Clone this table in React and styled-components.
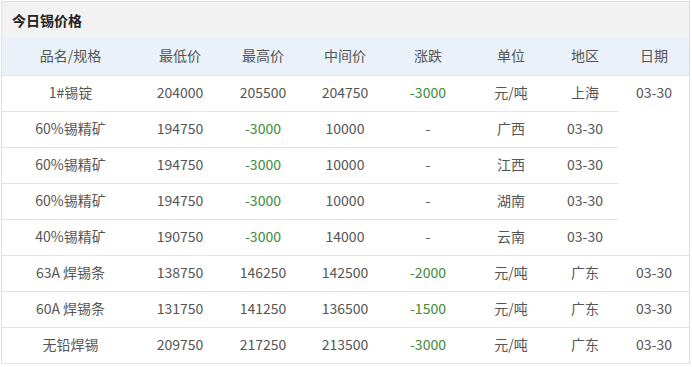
import React from 'react';
import styled, { createGlobalStyle } from 'styled-components';

const GlobalStyle = createGlobalStyle`
    body {
        margin: 0;
        background: #fff;
        font-family: "Noto Sans CJK SC", "Liberation Sans", sans-serif;
    }
`

const Panel = styled.div`
    width: 689px;
    margin: 1px 0 0 1px;
    box-sizing: border-box;
    border: 1px solid #dedede;
    border-bottom: none;
    background: #fff;
`

const Titulo = styled.div`
    height: 36px;
    line-height: 36px;
    padding-left: 10px;
    background: #f2f2f2;
    color: #222;
    font-size: 14px;
    font-weight: bold;
`

const Tabela = styled.table`
    width: 100%;
    table-layout: fixed;
    border-collapse: separate;
    border-spacing: 0;
    font-size: 14px;
    color: #555;
`

const Cabecalho = styled.th`
    height: 34px;
    padding: 0 0 3px;
    font-weight: normal;
    text-align: center;
    background: #eaf1f8;
    border-bottom: 1px solid #dfe6ee;
    color: #555;
`

const Celula = styled.td`
    height: 32px;
    padding: 0 0 3px;
    text-align: center;
    border-bottom: 1px solid #e4e4e4;
    color: ${props => (props.$verde ? '#3a8a3a' : '#555')};
    vertical-align: ${props => (props.$topo ? 'top' : 'middle')};
    line-height: ${props => (props.$topo ? '32px' : 'normal')};
`

const larguras = [137, 82, 84, 80, 86, 80, 68, 70]
const colunas = ['品名/规格', '最低价', '最高价', '中间价', '涨跌', '单位', '地区', '日期']

const linhas = [
    ['1#锡锭', '204000', '205500', '204750', '-3000', '元/吨', '上海', '03-30'],
    ['60%锡精矿', '194750', '-3000', '10000', '-', '广西', '03-30'],
    ['60%锡精矿', '194750', '-3000', '10000', '-', '江西', '03-30'],
    ['60%锡精矿', '194750', '-3000', '10000', '-', '湖南', '03-30'],
    ['40%锡精矿', '190750', '-3000', '14000', '-', '云南', '03-30'],
    ['63A 焊锡条', '138750', '146250', '142500', '-2000', '元/吨', '广东', '03-30'],
    ['60A 焊锡条', '131750', '141250', '136500', '-1500', '元/吨', '广东', '03-30'],
    ['无铅焊锡', '209750', '217250', '213500', '-3000', '元/吨', '广东', '03-30'],
]

const ehVerde = (valor) => /^-\d/.test(valor)

export default function App() {
    return (
        <>
            <GlobalStyle />
            <Panel>
                <Titulo>今日锡价格</Titulo>
                <Tabela>
                    <colgroup>
                        {larguras.map((w, i) => <col key={i} style={{ width: w }} />)}
                    </colgroup>
                    <thead>
                        <tr>
                            {colunas.map(c => <Cabecalho key={c}>{c}</Cabecalho>)}
                        </tr>
                    </thead>
                    <tbody>
                        {linhas.map((linha, i) => (
                            <tr key={i}>
                                {linha.map((valor, j) => {
                                    const mesclada = i === 0 && j === 7
                                    return (
                                        <Celula
                                            key={j}
                                            $verde={ehVerde(valor)}
                                            $topo={mesclada}
                                            rowSpan={mesclada ? 5 : undefined}
                                        >
                                            {valor}
                                        </Celula>
                                    )
                                })}
                            </tr>
                        ))}
                    </tbody>
                </Tabela>
            </Panel>
        </>
    )
}
